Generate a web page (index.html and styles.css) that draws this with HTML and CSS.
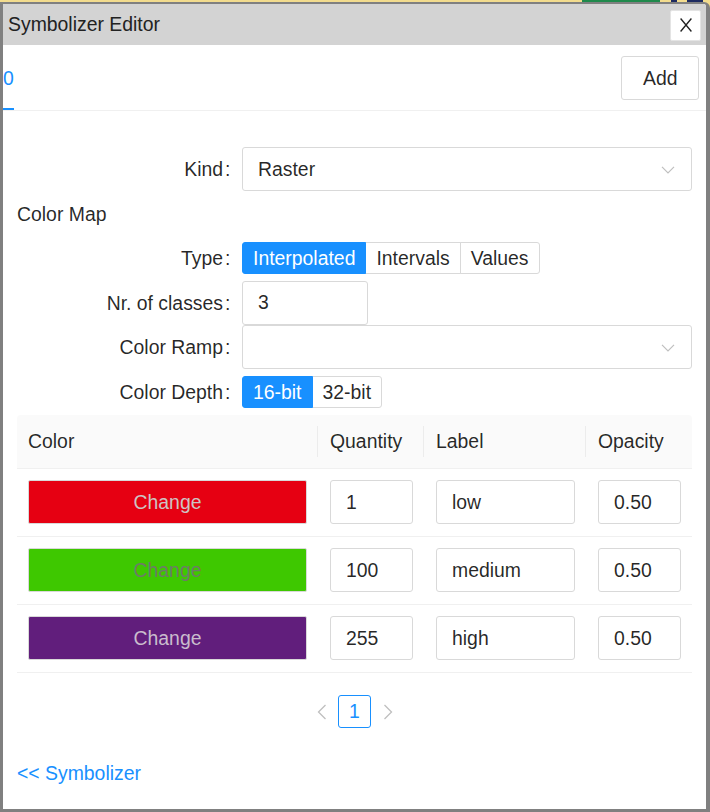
FILE: index.html
```html
<!DOCTYPE html>
<html>
<head>
<meta charset="utf-8">
<title>Symbolizer Editor</title>
<link rel="stylesheet" href="styles.css">
</head>
<body>
<div class="backdrop">
  <span class="bd-green"></span>
  <span class="bd-navy"></span>
  <span class="bd-navy2"></span>
</div>
<div class="window">
  <div class="titlebar">
    <span class="title">Symbolizer Editor</span>
    <button class="close" aria-label="Close"><svg width="12" height="14" viewBox="0 0 12 14"><path d="M0.6 0.5 L11.4 13.5 M11.4 0.5 L0.6 13.5" fill="none" stroke="#222" stroke-width="1.35"/></svg></button>
  </div>
  <div class="tabbar">
    <div class="tab active">0</div>
    <button class="btn add">Add</button>
  </div>
  <div class="content">
    <div class="form">
      <div class="row">
        <div class="lbl">Kind<span class="colon">:</span></div>
        <div class="select"><span>Raster</span><svg class="chev" width="14" height="8" viewBox="0 0 14 8"><path d="M1 0.8 L7 6.8 L13 0.8" fill="none" stroke="#bfbfbf" stroke-width="1.2"/></svg></div>
      </div>
      <div class="section">Color Map</div>
      <div class="row">
        <div class="lbl">Type<span class="colon">:</span></div>
        <div class="radio-group">
          <span class="rb on">Interpolated</span><span class="rb">Intervals</span><span class="rb">Values</span>
        </div>
      </div>
      <div class="row">
        <div class="lbl">Nr. of classes<span class="colon">:</span></div>
        <input class="input classes" value="3">
      </div>
      <div class="row">
        <div class="lbl">Color Ramp<span class="colon">:</span></div>
        <div class="select"><span></span><svg class="chev" width="14" height="8" viewBox="0 0 14 8"><path d="M1 0.8 L7 6.8 L13 0.8" fill="none" stroke="#bfbfbf" stroke-width="1.2"/></svg></div>
      </div>
      <div class="row">
        <div class="lbl">Color Depth<span class="colon">:</span></div>
        <div class="radio-group">
          <span class="rb on">16-bit</span><span class="rb">32-bit</span>
        </div>
      </div>
    </div>
    <table class="table">
      <colgroup><col class="c-color"><col class="c-qty"><col class="c-label"><col class="c-op"></colgroup>
      <thead>
        <tr><th>Color</th><th>Quantity</th><th>Label</th><th>Opacity</th></tr>
      </thead>
      <tbody>
        <tr>
          <td><button class="swatch red">Change</button></td>
          <td><input class="input" value="1"></td>
          <td><input class="input" value="low"></td>
          <td><input class="input" value="0.50"></td>
        </tr>
        <tr>
          <td><button class="swatch green">Change</button></td>
          <td><input class="input" value="100"></td>
          <td><input class="input" value="medium"></td>
          <td><input class="input" value="0.50"></td>
        </tr>
        <tr>
          <td><button class="swatch purple">Change</button></td>
          <td><input class="input" value="255"></td>
          <td><input class="input" value="high"></td>
          <td><input class="input" value="0.50"></td>
        </tr>
      </tbody>
    </table>
    <div class="pagination">
      <span class="pg arrow"><svg width="10" height="16" viewBox="0 0 10 16"><path d="M8.5 1 L1.5 8 L8.5 15" fill="none" stroke="#bfbfbf" stroke-width="1.3"/></svg></span>
      <span class="pg cur">1</span>
      <span class="pg arrow"><svg width="10" height="16" viewBox="0 0 10 16"><path d="M1.5 1 L8.5 8 L1.5 15" fill="none" stroke="#bfbfbf" stroke-width="1.3"/></svg></span>
    </div>
    <a class="back" href="#">&lt;&lt; Symbolizer</a>
  </div>
</div>
</body>
</html>
```

FILE: styles.css
```css
* { box-sizing: border-box; }
html, body { margin: 0; padding: 0; }
body {
  background: #f3dc8e;
  font-family: "Liberation Sans", Arial, sans-serif;
  font-size: 19.4px;
  color: rgba(0,0,0,0.85);
  width: 710px;
  height: 812px;
  overflow: hidden;
}
.backdrop {
  height: 2px;
  display: flex;
}
.bd-green { margin-left: 582px; width: 78px; background: #1f8a4c; }
.bd-navy { margin-left: 11px; width: 6px; background: #1d2a60; }
.bd-navy2 { margin-left: 10px; width: 16px; background: #1d2a60; }

.window {
  height: 810px;
  border-style: solid;
  border-color: #808080;
  border-width: 2px 4px 3px 3px;
  border-top-right-radius: 6px;
  background: #fff;
  display: flex;
  flex-direction: column;
  overflow: hidden;
}
.titlebar {
  height: 41px;
  flex: none;
  background: #d3d3d3;
  display: flex;
  align-items: center;
  justify-content: space-between;
  padding: 0 5px 0 5px;
}
.title { color: #222; }
.close {
  width: 31px;
  height: 31px;
  margin-top: 1px;
  background: #fff;
  border: 1px solid #e4e4e4;
  border-radius: 2px;
  padding: 0;
  display: flex;
  align-items: center;
  justify-content: center;
}
.tabbar {
  height: 66px;
  flex: none;
  display: flex;
  justify-content: space-between;
  align-items: stretch;
  border-bottom: 1px solid #f0f0f0;
  padding-right: 7px;
}
.tab {
  display: flex;
  align-items: center;
  color: #1890ff;
  box-shadow: inset 0 -2px 0 #1890ff;
  padding-top: 2px;
}
.btn {
  font: inherit;
  color: rgba(0,0,0,0.85);
  background: #fff;
  border: 1px solid #d9d9d9;
  border-radius: 3px;
  height: 44px;
  padding: 1px 20.5px 0;
  align-self: center;
}
.content {
  padding: 36px 14px 0 14px;
  display: flex;
  flex-direction: column;
}
.row {
  height: 44.5px;
  display: grid;
  grid-template-columns: 225px 450px;
  align-items: center;
}
.lbl {
  text-align: right;
  white-space: nowrap;
  padding-top: 1px;
}
.colon { margin: 0 11.6px 0 2px; }
.section {
  height: 44.5px;
  display: flex;
  align-items: center;
  padding-top: 1px;
}
.select {
  height: 44px;
  border: 1px solid #d9d9d9;
  border-radius: 3px;
  padding: 0 16px 0 15px;
  display: flex;
  align-items: center;
  justify-content: space-between;
}
.chev { margin-top: 2px; }
.radio-group {
  display: flex;
  height: 32px;
}
.rb {
  height: 32px;
  line-height: 30px;
  padding: 0 10px;
  border: 1px solid #d9d9d9;
  margin-left: -1px;
  background: #fff;
  white-space: nowrap;
}
.rb:first-child { margin-left: 0; border-radius: 3px 0 0 3px; }
.rb:last-child { border-radius: 0 3px 3px 0; }
.rb.on {
  background: #1890ff;
  border-color: #1890ff;
  color: #fff;
  position: relative;
}
.input {
  font: inherit;
  color: rgba(0,0,0,0.85);
  height: 44px;
  width: 100%;
  border: 1px solid #d9d9d9;
  border-radius: 3px;
  padding: 0 15px;
  background: #fff;
  outline: none;
}
.input.classes { width: 126px; }

.table {
  margin-top: 1px;
  width: 675px;
  table-layout: fixed;
  border-collapse: separate;
  border-spacing: 0;
}
.c-color { width: 301px; }
.c-qty { width: 106px; }
.c-label { width: 162px; }
.c-op { width: 106px; }
.table th {
  background: #fafafa;
  height: 54px;
  padding: 0 11px 0 12px;
  text-align: left;
  font-weight: normal;
  border-bottom: 1px solid #f0f0f0;
  position: relative;
}
.table th:first-child { border-top-left-radius: 4px; padding-left: 11px; }
.table th:last-child { border-top-right-radius: 4px; }
.table th:not(:last-child)::after {
  content: "";
  position: absolute;
  right: 0;
  top: 11px;
  width: 1px;
  height: 31px;
  background: #ececec;
}
.table td {
  padding: 11px 11px 12px 12px;
  border-bottom: 1px solid #f0f0f0;
}
.table td:first-child { padding-left: 11px; }
.swatch {
  width: 100%;
  height: 44px;
  font: inherit;
  border: 1px solid #d9d9d9;
  border-radius: 2px;
  padding: 0;
}
.swatch.red { background: #e60012; color: #cdc3c3; }
.swatch.green { background: #3ec800; color: #6e7a69; }
.swatch.purple { background: #611e7c; color: #c9bccd; }

.pagination {
  margin-top: 22px;
  display: flex;
  justify-content: center;
}
.pg {
  width: 33px;
  height: 33px;
  display: flex;
  align-items: center;
  justify-content: center;
}
.pg.cur {
  border: 1px solid #1890ff;
  border-radius: 3px;
  color: #1890ff;
}
.back {
  margin-top: 30px;
  line-height: 30px;
  color: #1890ff;
  text-decoration: none;
  align-self: flex-start;
}
```
